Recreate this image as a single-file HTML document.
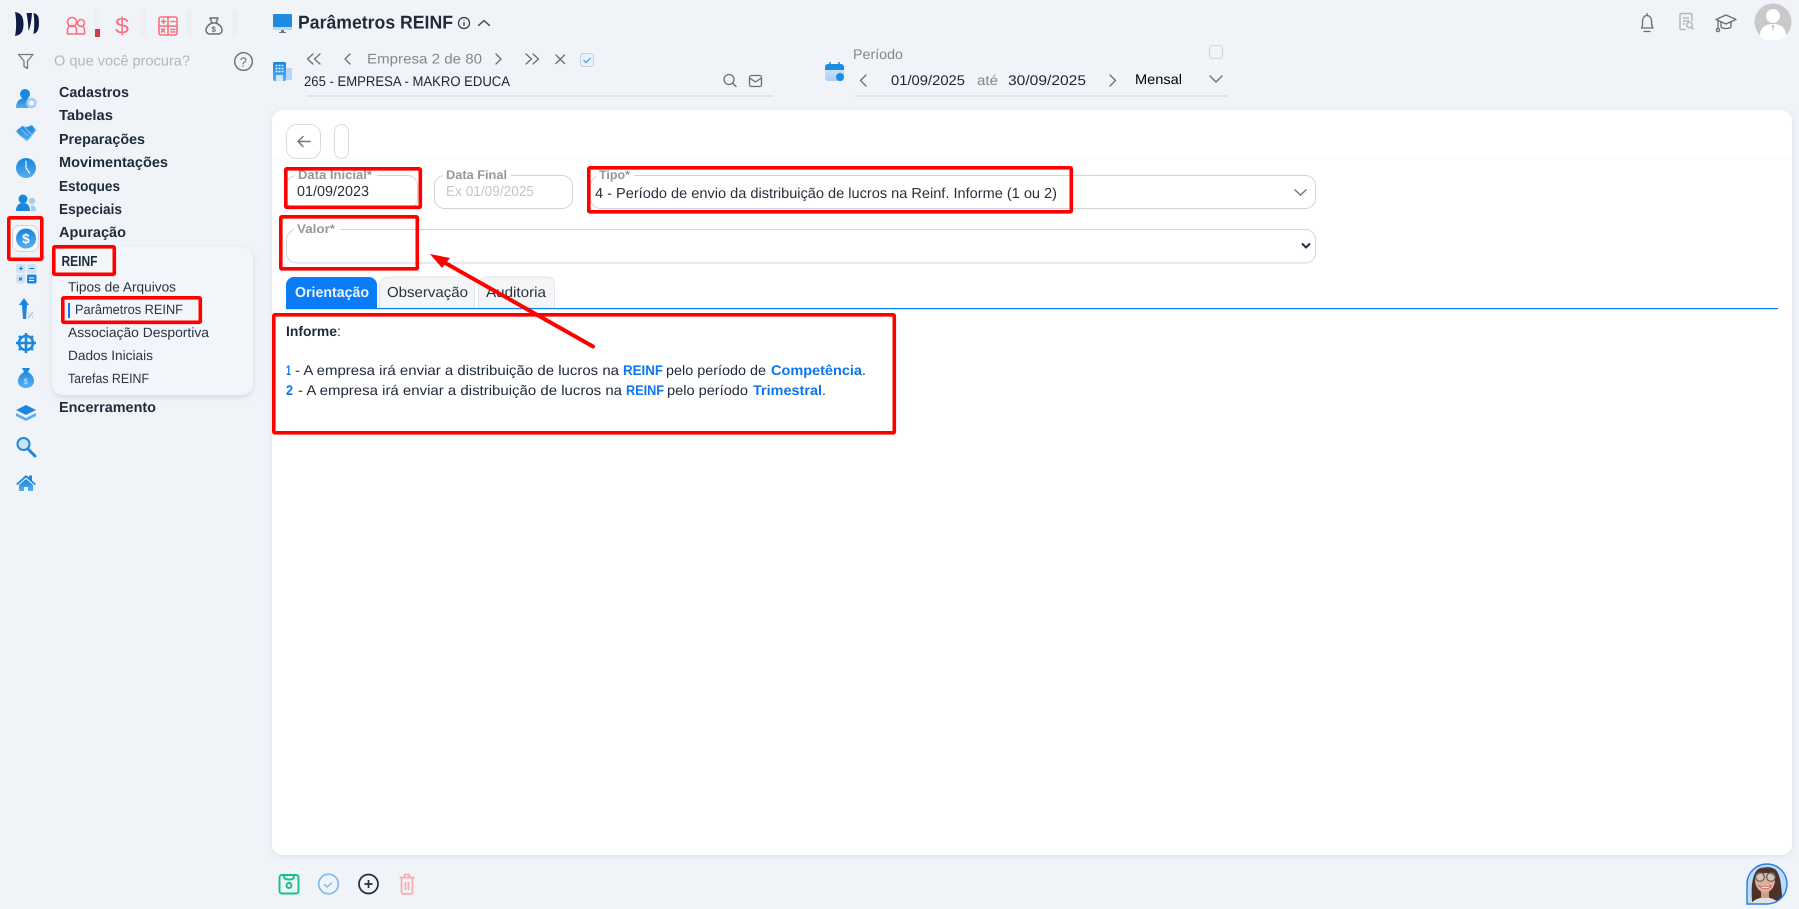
<!DOCTYPE html>
<html lang="pt"><head><meta charset="utf-8"><title>Parâmetros REINF</title>
<style>
html,body{margin:0;padding:0;width:1799px;height:909px;overflow:hidden;background:#f0f4f9}
svg{display:block;position:absolute;left:0;top:0}
text{font-family:"Liberation Sans",sans-serif;white-space:pre;text-rendering:geometricPrecision}
.m{font-size:14.500px;font-weight:700;fill:#1f2a3a}
.s{font-size:13.500px;fill:#2b3445}
.l{font-size:12.500px;font-weight:700;fill:#979797}
.v{font-size:14.500px;fill:#29303c}
.b{font-size:14px;fill:#1f2937}
.bb{font-size:14px;font-weight:700;fill:#0b76f0}
.g{font-size:14px;fill:#85878b}
.ic{fill:none;stroke:#6a6d72;stroke-width:1.300;stroke-linecap:round;stroke-linejoin:round}
.p{fill:none;stroke:#fb6f7c;stroke-width:1.600;stroke-linecap:round;stroke-linejoin:round}
.r{fill:none;stroke:#ff0000;stroke-width:3.600}
</style></head><body>
<svg width="1799" height="909" viewBox="0 0 1799 909" xmlns="http://www.w3.org/2000/svg">
<defs>
<linearGradient id="a" x1="0" y1="0" x2="0" y2="1"><stop offset="0" stop-color="#1585de"/><stop offset="1" stop-color="#59aef0"/></linearGradient>
<linearGradient id="c" x1="0" y1="0" x2="0" y2="1"><stop offset="0" stop-color="#d6e8f8"/><stop offset="1" stop-color="#a9d0f2"/></linearGradient>
<filter id="sh" x="-10%" y="-10%" width="120%" height="125%"><feDropShadow dx="0" dy="2" stdDeviation="3" flood-color="#8794a8" flood-opacity=".28"/></filter>
<filter id="sh2" x="-2%" y="-2%" width="104%" height="104%"><feDropShadow dx="0" dy="1" stdDeviation="3" flood-color="#9aa6b5" flood-opacity=".25"/></filter>
<clipPath id="ava"><path d="M1747 884a20 20 0 1 1 20 20h-20z"/></clipPath>
</defs>

<!-- logo -->
<path d="M15 12c5 1 8.500 3 8.500 12s-3.500 11-8.500 12c1.500-7 1.500-17 0-24z" fill="#101a44"/><path d="M26.500 13h5.500c-.5 7-1.500 14-3.500 18-.2-6-.8-12-2-18z" fill="#101a44"/><path d="M33.500 13c4 1 5.500 3 5.500 10s-2 10-5.500 11c1-7 1-14 0-21z" fill="#101a44"/>

<!-- top icons -->
<g class="p"><circle cx="72" cy="22" r="4.500"/><circle cx="81" cy="23" r="3.500"/><path d="M67.500 34v-4c0-3 2-4.500 4.500-4.500s4.500 1.500 4.500 4.500v4zM76.500 34h8v-4c0-2.500-1.500-4-3.500-4"/></g>
<rect x="94" y="10" width="6" height="27" fill="#eeeff2"/><rect x="95" y="29" width="5" height="8" fill="#d8384a"/>
<text x="115" y="33.500" font-size="23" fill="#fb6f7c" textLength="14" lengthAdjust="spacingAndGlyphs">$</text>
<rect x="140" y="10" width="6" height="27" fill="#eeeff2"/>
<g class="p"><rect x="159" y="17" width="18" height="18" rx="2"/><path d="M168 17v18M159 26h18M161.500 21.500h4M163.500 19.500v4M171 21.500h4M161.500 29l3 3M164.500 29l-3 3M171 29.500h4M171 32h4"/></g>
<rect x="186" y="10" width="6" height="27" fill="#eeeff2"/>
<g fill="none" stroke="#6b6e73" stroke-width="1.500" stroke-linejoin="round"><path d="M210 18h8l-2 5c4 1.500 6 5 6 7 0 3-2 4-4 4h-8c-2 0-4-1-4-4 0-2 2-5.500 6-7z"/><path d="M212 23h4"/></g>
<text x="211.500" y="32" font-size="8" font-weight="700" fill="#6b6e73">$</text>
<rect x="232" y="10" width="6" height="27" fill="#eeeff2"/>

<!-- search row -->
<path class="ic" d="M18.500 54.500h14.500l-5.500 6.500v7.500l-3.500-2v-5.500z" style="stroke:#777"/>
<text x="54" y="65.500" font-size="14.500" fill="#b4b7bb" textLength="136" lengthAdjust="spacingAndGlyphs">O que você procura?</text>
<circle cx="243.500" cy="61.500" r="8.800" fill="none" stroke="#6a6d72" stroke-width="1.400"/>
<text x="239.700" y="66.500" font-size="13" fill="#6a6d72">?</text>

<!-- left rail -->
<circle cx="25" cy="94" r="5" fill="#1c88dd"/><path d="M16 108c0-7 4-10 9-10 2 0 4 .5 5 1.500-2 2-2 6-1 8.500z" fill="url(#a)"/>
<circle cx="31.500" cy="103" r="4" fill="none" stroke="#a9cdee" stroke-width="2.600"/>
<path d="M16 131l6-5 5 1 5-2 4 5-6 8-3 3-4-3-4-3zM21 129l7 7M24 127l8 8" fill="url(#a)" stroke="#a8d0f2" stroke-width=".8"/>
<circle cx="26" cy="168" r="10" fill="url(#a)"/><path d="M26 161v7l3.500 5" stroke="#fff" stroke-width="1.100" fill="none" stroke-linecap="round"/>
<circle cx="23" cy="199" r="4.500" fill="#1c88dd"/><circle cx="32" cy="201" r="3.200" fill="#a5cdee"/><path d="M16 211c0-6 3-8 7-8s7 2 7 8z" fill="#1c88dd"/><path d="M31 205c3 0 5 2 5 6h-5z" fill="#a5cdee"/>
<rect x="12.500" y="225.500" width="26" height="26" rx="7" fill="#f6f9fd" stroke="#c5d6e6"/>
<circle cx="26" cy="238.500" r="10" fill="url(#a)"/><text x="22" y="243.500" font-size="14" font-weight="700" fill="#fff">$</text>
<rect x="16" y="264" width="9.500" height="9" rx="1.500" fill="#cfe3f5"/><rect x="27" y="264" width="9.500" height="9" rx="1.500" fill="#cfe3f5"/><rect x="16" y="274.500" width="9.500" height="9" rx="1.500" fill="#cfe3f5"/><rect x="27" y="274.500" width="9.500" height="9" rx="1.500" fill="#1c88dd"/>
<path d="M19 268.500h4M21 266.500v4M29 268.500h5M19 277.500l3 3M22 277.500l-3 3" stroke="#1c78c8" stroke-width="1.100"/><path d="M29 278h5M29 280.500h5" stroke="#fff" stroke-width="1.100"/>
<path d="M24 298l-5 7h3l1 14h3l1-14h2z" fill="#1c88dd"/><path d="M28 318l5-6M28 313h1M32 317h1" stroke="#a5cdee" stroke-width="1.600"/>
<circle cx="26" cy="343" r="7" fill="none" stroke="#1c88dd" stroke-width="2.600"/><path d="M26 333v20M16 343h20M19 336l2 2M33 336l-2 2M19 350l2-2M33 350l-2-2" stroke="#1c88dd" stroke-width="2.600"/>
<path d="M22 368h8l-2 4c4 2 6 6 6 9 0 4-3 7-8 7s-8-3-8-7c0-3 2-7 6-9z" fill="url(#a)"/><text x="23.500" y="384" font-size="8" fill="#d5ebfb">$</text>
<path d="M26 405l10 5-10 5-10-5z" fill="#1c88dd"/><path d="M16 413l10 5 10-5v3l-10 5-10-5z" fill="#59aef0"/>
<circle cx="23.500" cy="444" r="6" fill="#cfe3f5" stroke="#1c88dd" stroke-width="2"/><path d="M28.500 449.500l6.500 6.500" stroke="#1c88dd" stroke-width="3" stroke-linecap="round"/>
<path d="M16 484l10-9 3 2.500v-2h3v5l4 3.500-1.500 1-8.500-7.500-8.500 7.500z" fill="#1c88dd"/><path d="M19 485l7-6 7 6v6h-5v-4h-4v4h-5z" fill="url(#a)"/>

<!-- menu -->
<text class="m" x="59" y="97" textLength="70" lengthAdjust="spacingAndGlyphs">Cadastros</text>
<text class="m" x="59" y="120" textLength="54" lengthAdjust="spacingAndGlyphs">Tabelas</text>
<text class="m" x="59" y="144" textLength="86" lengthAdjust="spacingAndGlyphs">Preparações</text>
<text class="m" x="59" y="167" textLength="109" lengthAdjust="spacingAndGlyphs">Movimentações</text>
<text class="m" x="59" y="191" textLength="61" lengthAdjust="spacingAndGlyphs">Estoques</text>
<text class="m" x="59" y="214" textLength="63" lengthAdjust="spacingAndGlyphs">Especiais</text>
<text class="m" x="59" y="237" textLength="67" lengthAdjust="spacingAndGlyphs">Apuração</text>
<rect x="52" y="247" width="201" height="148" rx="11" fill="#f2f5f9" filter="url(#sh)"/>
<text class="m" x="61.500" y="266" textLength="36" lengthAdjust="spacingAndGlyphs">REINF</text>
<text class="s" x="68" y="291.500" textLength="108" lengthAdjust="spacingAndGlyphs">Tipos de Arquivos</text>
<rect x="68" y="303" width="2" height="15" fill="#0b7bf5"/>
<text class="s" x="75" y="314" textLength="108" lengthAdjust="spacingAndGlyphs">Parâmetros REINF</text>
<text class="s" x="68" y="337" textLength="141" lengthAdjust="spacingAndGlyphs">Associação Desportiva</text>
<text class="s" x="68" y="360" textLength="85" lengthAdjust="spacingAndGlyphs">Dados Iniciais</text>
<text class="s" x="68" y="383" textLength="81" lengthAdjust="spacingAndGlyphs">Tarefas REINF</text>
<text class="m" x="59" y="412" textLength="97" lengthAdjust="spacingAndGlyphs">Encerramento</text>

<!-- header -->
<rect x="273" y="14" width="19" height="13" rx="1" fill="#1c8be0"/><rect x="273" y="27" width="19" height="3" fill="#b8d8f3"/><path d="M281 30h3v2h2v1h-7v-1h2z" fill="#5f7d95"/>
<text x="298" y="28.500" font-size="18.500" font-weight="700" fill="#1f2a3a" textLength="155" lengthAdjust="spacingAndGlyphs">Parâmetros REINF</text>
<circle cx="464" cy="23" r="5.500" fill="none" stroke="#333" stroke-width="1.200"/><path d="M464 22v4M464 20v.8" stroke="#333" stroke-width="1.200"/>
<path d="M478.500 25.500l5.500-5 5.500 5" fill="none" stroke="#444" stroke-width="1.400" stroke-linecap="round" stroke-linejoin="round"/>

<g class="ic"><path d="M313 54l-5.500 5 5.500 5M320 54l-5.500 5 5.500 5M350 54l-5 5 5 5M496 54l5 5-5 5M526 54l5.500 5-5.500 5M533 54l5.500 5-5.500 5M556 55l8.500 8.500M564.500 55l-8.500 8.500"/></g>
<text class="g" x="367" y="63.500" textLength="115" lengthAdjust="spacingAndGlyphs">Empresa 2 de 80</text>
<rect x="580.500" y="53.500" width="13" height="13" rx="3" fill="#e9f1fa" stroke="#c7ced6"/><path d="M583.500 60l2.500 2.500 4.500-4.500" fill="none" stroke="#5baaf0" stroke-width="1.500"/>
<rect x="273" y="62" width="13" height="19" rx="1.500" fill="url(#a)"/><rect x="286" y="68" width="6" height="12" fill="#b7d7f2"/><path d="M275.500 65.500h8M275.500 68.500h8M275.500 71.500h8" stroke="#d8ecfb" stroke-width="1.400" stroke-dasharray="2 1"/><rect x="276" y="75" width="7" height="6" fill="#cfe4f6"/>
<text x="304" y="86" font-size="14" fill="#1c2430" textLength="206" lengthAdjust="spacingAndGlyphs">265 - EMPRESA - MAKRO EDUCA</text>
<circle cx="729" cy="79.500" r="5" class="ic"/><path class="ic" d="M733 83.500l3 3"/>
<rect x="749.500" y="75.500" width="12" height="11" rx="2" class="ic"/><path class="ic" d="M749.500 78l6 4 6-4"/>
<rect x="306" y="95.500" width="468" height="1" fill="#cfd3da"/>

<rect x="825" y="64" width="19" height="17" rx="3" fill="url(#c)"/><path d="M825 67a3 3 0 0 1 3-3h13a3 3 0 0 1 3 3v3h-19z" fill="#1c8be0"/><path d="M830 62v4M839 62v4" stroke="#1c8be0" stroke-width="1.500"/><circle cx="840" cy="77" r="4" fill="#1c8be0"/>
<text class="g" x="853" y="59" textLength="50" lengthAdjust="spacingAndGlyphs">Período</text>
<rect x="1209.500" y="45.500" width="13" height="13" rx="3" fill="#f0f4f9" stroke="#cfd3d8"/>
<g class="ic"><path d="M866 75l-5.500 5.500 5.500 5.500M1110 75l5.500 5.500-5.500 5.500M1210 76l6 6 6-6"/></g>
<text x="891" y="85" font-size="14" fill="#1c2430" textLength="74" lengthAdjust="spacingAndGlyphs">01/09/2025</text>
<text class="g" x="977" y="85" textLength="21" lengthAdjust="spacingAndGlyphs">até</text>
<text x="1008" y="85" font-size="14" fill="#1c2430" textLength="78" lengthAdjust="spacingAndGlyphs">30/09/2025</text>
<text x="1135" y="84" font-size="14" fill="#000" textLength="47" lengthAdjust="spacingAndGlyphs">Mensal</text>
<rect x="855" y="95.500" width="373" height="1" fill="#cfd3da"/>

<!-- top right -->
<path class="ic" d="M1647 13.500v2M1641.500 28c1.500-2 1-4 1-7s2-5.500 4.500-5.500 4.500 2.500 4.500 5.500 0 5 1.500 7zM1644 31.500h6"/>
<g fill="none" stroke="#b3b8bd" stroke-width="1.500"><path d="M1692 21v-6a1.500 1.500 0 0 0-1.500-1.500h-9a1.500 1.500 0 0 0-1.500 1.500v13a1.500 1.500 0 0 0 1.500 1.500h4"/><path d="M1683 18h6M1683 21h6M1683 24h2"/><circle cx="1689.500" cy="25" r="2.800"/><path d="M1691.500 27.500l2 2"/></g>
<g class="ic"><path d="M1726 15l10 4.500-10 4.500-10-4.500zM1721 22v5c2 2 8 2 10 0v-5M1718 21v8"/><circle cx="1718" cy="30" r="1.600"/></g>
<circle cx="1773" cy="22" r="18.500" fill="#c9c9c9"/><circle cx="1773" cy="16" r="7" fill="#fff"/><path d="M1760 36c0-9 6-12 13-12s13 3 13 12c-3.500 3-8 4.500-13 4.500s-9.500-1.500-13-4.500z" fill="#fff"/><path d="M1771.500 25l1.500 7 1.500-7z" fill="#c9c9c9"/>

<!-- card -->
<rect x="272" y="110" width="1520" height="745" rx="11" fill="#fff" filter="url(#sh2)"/>
<rect x="272" y="158" width="1520" height="1" fill="#f7f8f9"/>
<rect x="286.500" y="124.500" width="34" height="34" rx="10" fill="#fff" stroke="#d8dbe0"/>
<path d="M298 141.500h12M303 136.500l-5 5 5 5" fill="none" stroke="#777" stroke-width="1.500" stroke-linecap="round" stroke-linejoin="round"/>
<rect x="334.500" y="124.500" width="14" height="34" rx="7" fill="#fff" stroke="#d8dbe0"/>

<!-- fields -->
<g fill="none" stroke="#d0d3d9"><rect x="286.500" y="175.500" width="131" height="33" rx="10"/><rect x="434.500" y="175.500" width="138" height="33" rx="10"/><rect x="590.500" y="175.500" width="725" height="33" rx="10"/><rect x="286.500" y="229.500" width="1029" height="33.500" rx="10"/></g>
<rect x="295" y="172" width="82" height="8" fill="#fff"/><rect x="443" y="172" width="68" height="8" fill="#fff"/><rect x="596" y="172" width="38" height="8" fill="#fff"/><rect x="294" y="226" width="46" height="8" fill="#fff"/>
<text class="l" x="298" y="179" textLength="74" lengthAdjust="spacingAndGlyphs">Data Inicial*</text>
<text class="v" x="297" y="196" textLength="72" lengthAdjust="spacingAndGlyphs">01/09/2023</text>
<text class="l" x="446" y="179" textLength="61" lengthAdjust="spacingAndGlyphs">Data Final</text>
<text x="446" y="196" font-size="14.500" fill="#c3c6ca" textLength="88" lengthAdjust="spacingAndGlyphs">Ex 01/09/2025</text>
<text class="l" x="599" y="179" textLength="31" lengthAdjust="spacingAndGlyphs">Tipo*</text>
<text class="v" x="595" y="198" textLength="462" lengthAdjust="spacingAndGlyphs">4 - Período de envio da distribuição de lucros na Reinf. Informe (1 ou 2)</text>
<path d="M1294.500 189.500l6 5.500 6-5.500" fill="none" stroke="#777" stroke-width="1.500"/>
<text class="l" x="297" y="233" textLength="38" lengthAdjust="spacingAndGlyphs">Valor*</text>
<path d="M1302 243.500l4 4 4-4" fill="none" stroke="#1f2d40" stroke-width="2"/>

<!-- tabs -->
<path d="M286 308v-23a8 8 0 0 1 8-8h75a8 8 0 0 1 8 8v23z" fill="#0a7cf7"/>
<path d="M379.500 308v-23a8 8 0 0 1 8-8h80a7 7 0 0 1 7 7v24z" fill="#f4f5f6" stroke="#e3e5e8"/>
<path d="M478.500 308v-23a8 8 0 0 1 8-8h61a7 7 0 0 1 7 7v24z" fill="#f4f5f6" stroke="#e3e5e8"/>
<text x="295" y="297" font-size="14.500" font-weight="700" fill="#eaf3ff" textLength="74" lengthAdjust="spacingAndGlyphs">Orientação</text>
<text x="387" y="297" font-size="14.500" fill="#2b3240" textLength="81" lengthAdjust="spacingAndGlyphs">Observação</text>
<text x="486" y="297" font-size="14.500" fill="#2b3240" textLength="60" lengthAdjust="spacingAndGlyphs">Auditoria</text>
<rect x="286" y="308" width="1492" height="1.200" fill="#0a7cf7"/>

<!-- content -->
<text x="286" y="336" font-size="14" font-weight="700" fill="#1f2937" textLength="51" lengthAdjust="spacingAndGlyphs">Informe</text><text class="b" x="337" y="336">:</text>
<text class="bb" x="286" y="375" textLength="5" lengthAdjust="spacingAndGlyphs">1</text>
<text class="b" x="295" y="375" textLength="324" lengthAdjust="spacingAndGlyphs">- A empresa irá enviar a distribuição de lucros na</text>
<text class="bb" x="623" y="375" textLength="40" lengthAdjust="spacingAndGlyphs">REINF</text>
<text class="b" x="666" y="375" textLength="100" lengthAdjust="spacingAndGlyphs">pelo período de</text>
<text class="bb" x="771" y="375" textLength="91" lengthAdjust="spacingAndGlyphs">Competência</text>
<text class="b" x="862" y="375">.</text>
<text class="bb" x="286" y="395" textLength="7" lengthAdjust="spacingAndGlyphs">2</text>
<text class="b" x="298" y="395" textLength="324" lengthAdjust="spacingAndGlyphs">- A empresa irá enviar a distribuição de lucros na</text>
<text class="bb" x="626" y="395" textLength="38" lengthAdjust="spacingAndGlyphs">REINF</text>
<text class="b" x="667" y="395" textLength="81" lengthAdjust="spacingAndGlyphs">pelo período</text>
<text class="bb" x="753" y="395" textLength="69" lengthAdjust="spacingAndGlyphs">Trimestral</text>
<text class="b" x="822" y="395">.</text>

<!-- annotations -->
<rect class="r" x="8.800" y="217.800" width="33" height="41.500" rx="1"/>
<rect class="r" x="53.800" y="246.800" width="60.500" height="27.500" rx="1"/>
<rect class="r" x="62.800" y="297.800" width="137.500" height="24.500" rx="1"/>
<rect class="r" x="285.800" y="168.800" width="134.500" height="38.500" rx="1"/>
<rect class="r" x="588.800" y="167.800" width="482.500" height="44" rx="1"/>
<rect class="r" x="280.800" y="216.800" width="136.500" height="52" rx="1"/>
<rect class="r" x="273.800" y="314.800" width="620.500" height="118" rx="1"/>
<path d="M593 346.500L440 260" stroke="#ff0000" stroke-width="4" stroke-linecap="round"/>
<path d="M430 254l20 4-8 10z" fill="#ff0000"/>

<!-- bottom -->
<g fill="none" stroke="#12c28a" stroke-width="1.900" stroke-linejoin="round"><path d="M282 875h14a2.500 2.500 0 0 1 2.500 2.500v13.500a2.500 2.500 0 0 1-2.500 2.500h-14a2.500 2.500 0 0 1-2.500-2.500v-13.500a2.500 2.500 0 0 1 2.500-2.500z"/><path d="M284 875.500c0 3 1 4 5 4s5-1 5-4"/><circle cx="289" cy="885.500" r="2.500"/></g>
<circle cx="328.500" cy="884" r="9.800" fill="none" stroke="#7db8ec" stroke-width="1.600"/><path d="M324 884l3 3 5-4.500" fill="none" stroke="#7db8ec" stroke-width="1.500"/>
<circle cx="368.500" cy="884" r="9.500" fill="none" stroke="#1f2d40" stroke-width="1.700"/><path d="M368.500 880v8M364.500 884h8" stroke="#1f2d40" stroke-width="1.700"/>
<g fill="none" stroke="#f9aab2" stroke-width="1.700" stroke-linejoin="round"><path d="M399.500 877.500h15M404 877l1-2.500h4l1 2.500M401.500 878v14a2 2 0 0 0 2 2h7a2 2 0 0 0 2-2v-14M405.500 882v8M408.500 882v8"/></g>

<!-- assistant -->
<g clip-path="url(#ava)"><rect x="1745" y="862" width="46" height="44" fill="#bcdcf5"/>
<path d="M1752 900c-1-12 0-24 5-30 5-4 14-4 19 0 6 7 5 22 7 34h-31z" fill="#4a332c"/>
<path d="M1748 908c3-7 9-10 17-11 8 1 14 4 17 11z" fill="#e4e0dc"/>
<rect x="1761" y="889" width="8" height="9" fill="#cf9c86"/>
<ellipse cx="1765" cy="880" rx="10" ry="12.500" fill="#e0b09a"/>
<path d="M1755 877c1-6 5-9 10-9 6 0 10 3 10 9-4-3-6-4-9-4-4 0-8 1-11 4z" fill="#4a332c"/>
<path d="M1759 885.500c4 2 8 2 12 0-1 4-10 4-12 0z" fill="#fff" stroke="#b5505a" stroke-width=".6"/></g>
<g fill="#cfd6dc" fill-opacity=".5" stroke="#5c5c5c" stroke-width="1.200"><circle cx="1760" cy="877" r="4.300"/><circle cx="1771" cy="877" r="4.300"/></g>
<path d="M1747 884a20 20 0 1 1 20 20h-20z" fill="none" stroke="#2a7bef" stroke-width="1.400"/>
</svg>
</body></html>
